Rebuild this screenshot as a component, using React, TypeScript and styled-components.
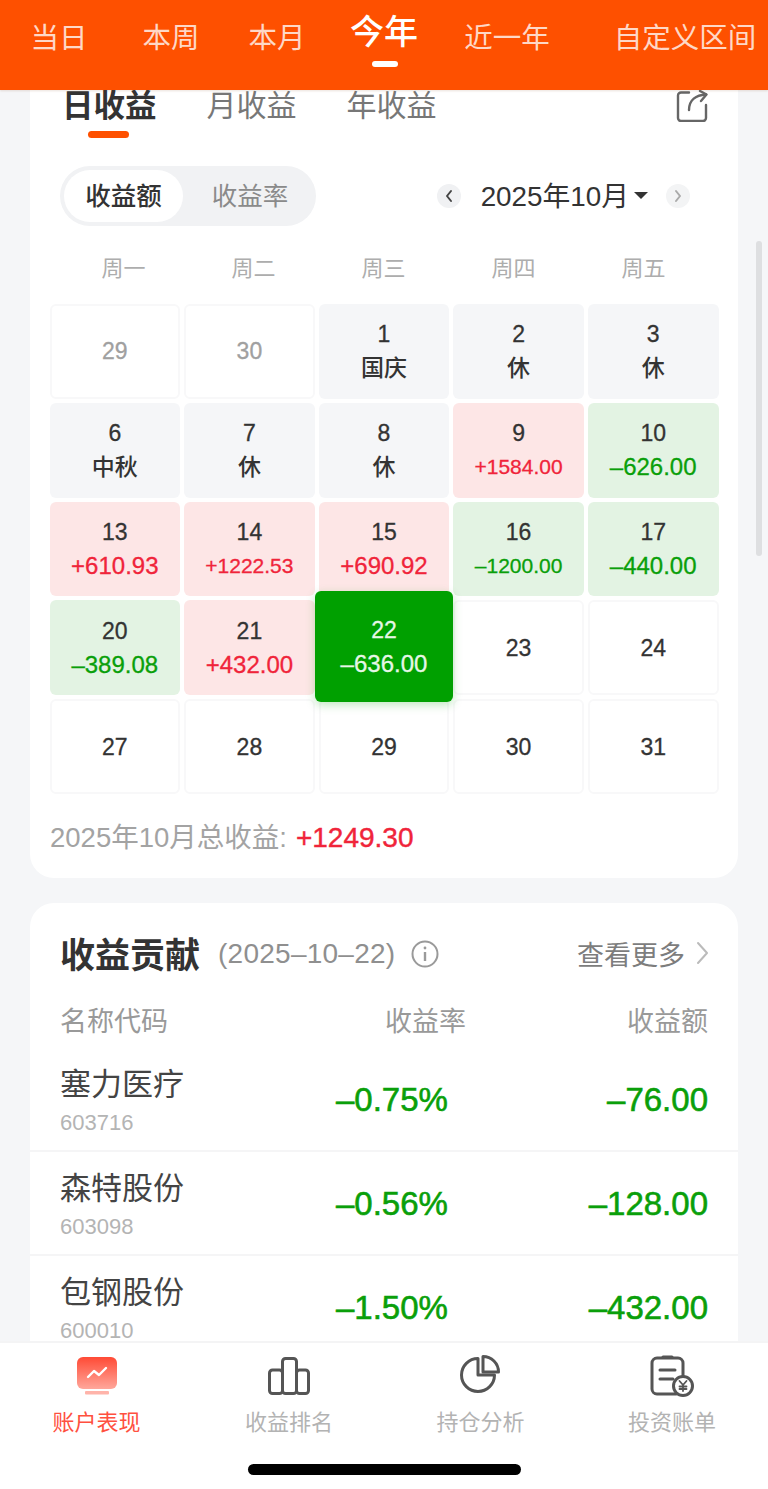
import styled, { createGlobalStyle } from 'styled-components';

const GlobalStyle = createGlobalStyle`
  html, body {
    margin: 0;
    padding: 0;
    background: #f5f6f8;
  }
  * {
    box-sizing: border-box;
  }
`;

const Page = styled.div`
  position: relative;
  width: 768px;
  height: 1489px;
  display: flex;
  flex-direction: column;
  overflow: hidden;
  background: #f5f6f8;
  font-family: "Liberation Sans", "Noto Sans CJK SC", sans-serif;
  color: #333;
`;

const RangeBar = styled.div`
  flex: none;
  height: 90px;
  display: flex;
  background: #fe5000;
  box-shadow: 0 1px 2px rgba(120, 60, 20, 0.15);
  z-index: 2;
`;

const RangeItem = styled.div<{ $w: number; $pad?: number; $active?: boolean }>`
  position: relative;
  flex: none;
  width: ${(p) => p.$w}px;
  padding-left: ${(p) => p.$pad || 0}px;
  padding-top: ${(p) => (p.$active ? 12 : 18)}px;
  text-align: center;
  white-space: nowrap;
  color: ${(p) => (p.$active ? '#fff' : 'rgba(255,255,255,0.78)')};
  font-size: ${(p) => (p.$active ? 34 : 28.5)}px;
  font-weight: ${(p) => (p.$active ? 500 : 400)};
  line-height: 40px;
`;

const RangeMark = styled.span`
  position: absolute;
  left: 42px;
  top: 61px;
  width: 26px;
  height: 6px;
  border-radius: 3px;
  background: #fff;
`;

const Scroll = styled.div`
  flex: 1;
  min-height: 0;
  padding: 0 30px;
`;

const ScrollThumb = styled.div`
  position: absolute;
  left: 756px;
  top: 241px;
  width: 6px;
  height: 315px;
  border-radius: 3px;
  background: #dedfe1;
`;

const Card = styled.section`
  background: #fff;
`;

const CalendarCard = styled(Card)`
  height: 788px;
  padding: 0 19.5px;
  border-radius: 0 0 24px 24px;
`;

const TabRow = styled.div`
  height: 48px;
  padding: 0 10.5px 0 12.5px;
  display: flex;
  gap: 50px;
`;

const Tab = styled.div<{ $active?: boolean }>`
  position: relative;
  font-size: ${(p) => (p.$active ? 31.5 : 30)}px;
  font-weight: ${(p) => (p.$active ? 700 : 400)};
  color: ${(p) => (p.$active ? '#333' : '#777')};
  line-height: 32px;
`;

const TabMark = styled.span`
  position: absolute;
  left: 26px;
  top: 41px;
  width: 41px;
  height: 7px;
  border-radius: 4px;
  background: #fe5000;
`;

const ShareButton = styled.div`
  margin-left: auto;
  width: 32px;
  height: 32px;
  color: #666;
`;

const FilterRow = styled.div`
  margin-top: 28px;
  padding: 0 10.5px;
  display: flex;
  align-items: center;
  justify-content: space-between;
`;

const Toggle = styled.div`
  width: 256px;
  height: 60px;
  padding: 4px;
  display: flex;
  align-items: center;
  border-radius: 30px;
  background: #f1f2f4;
`;

const ToggleItem = styled.div<{ $active?: boolean }>`
  height: 52px;
  width: ${(p) => (p.$active ? 119 : 129)}px;
  padding-left: ${(p) => (p.$active ? 0 : 5)}px;
  border-radius: 26px;
  background: ${(p) => (p.$active ? '#fff' : 'transparent')};
  color: ${(p) => (p.$active ? '#333' : '#8a8a8a')};
  font-size: 25.5px;
  font-weight: ${(p) => (p.$active ? 500 : 400)};
  line-height: 52px;
  text-align: center;
  white-space: nowrap;
`;

const MonthPicker = styled.div`
  display: flex;
  align-items: center;
  margin-right: 18px;
`;

const RoundArrow = styled.div<{ $dim?: boolean }>`
  width: 24px;
  height: 24px;
  border-radius: 50%;
  background: ${(p) => (p.$dim ? '#f3f4f5' : '#f0f1f3')};
  color: ${(p) => (p.$dim ? '#aaa' : '#444')};
  display: flex;
  align-items: center;
  justify-content: center;
`;

const MonthText = styled.div`
  margin: 0 18px 0 20px;
  padding-bottom: 5px;
  display: flex;
  align-items: center;
  gap: 5px;
  font-size: 27.8px;
  color: #333;
  white-space: nowrap;
`;

const Caret = styled.span`
  margin-top: 3px;
  width: 0;
  height: 0;
  border-left: 7px solid transparent;
  border-right: 7px solid transparent;
  border-top: 7px solid #333;
`;

const WeekRow = styled.div`
  margin-top: 27px;
  padding: 0 10px 0 9px;
  display: grid;
  grid-template-columns: repeat(5, 1fr);
  font-size: 22px;
  line-height: 32px;
  color: #adadad;
  text-align: center;
`;

const DayGrid = styled.div`
  margin-top: 19px;
  display: grid;
  grid-template-columns: repeat(5, 1fr);
  grid-auto-rows: 94.8px;
  gap: 4px;
`;

type DayKind = 'muted' | 'off' | 'up' | 'down' | 'selected' | 'plain';

const cellBg: Record<DayKind, string> = {
  muted: '#fff',
  plain: '#fff',
  off: '#f5f6f8',
  up: '#fde6e6',
  down: '#e3f3e3',
  selected: '#00a000',
};

const DayCell = styled.div<{ $kind: DayKind }>`
  position: relative;
  display: flex;
  flex-direction: column;
  align-items: center;
  justify-content: center;
  gap: 4px;
  border-radius: 6px;
  background: ${(p) => cellBg[p.$kind]};
  border: ${(p) => (p.$kind === 'muted' || p.$kind === 'plain' ? '2px solid #f8f8f9' : 'none')};
  color: ${(p) => (p.$kind === 'muted' ? '#a0a0a0' : p.$kind === 'selected' ? '#e6f7e6' : '#333')};
  ${(p) =>
    p.$kind === 'selected' &&
    `margin: -9px -4px -7px;
     z-index: 1;
     box-shadow: 0 3px 10px rgba(0, 160, 0, 0.25);`}
`;

const DayNum = styled.div`
  font-size: 23px;
  line-height: 30px;
  -webkit-text-stroke: 0.3px currentColor;
`;

const DayNote = styled.div`
  font-size: 23px;
  font-weight: 500;
  line-height: 30px;
`;

const DayValue = styled.div<{ $kind: DayKind; $long?: boolean }>`
  font-size: ${(p) => (p.$long ? 21 : 24)}px;
  line-height: 30px;
  white-space: nowrap;
  color: ${(p) => (p.$kind === 'up' ? '#f0243a' : p.$kind === 'down' ? '#0a9f0a' : '#e6f7e6')};
  -webkit-text-stroke: 0.3px currentColor;
`;

const MonthTotal = styled.div`
  margin-top: 26px;
  padding-left: 0.5px;
  display: flex;
  align-items: baseline;
  gap: 9px;
  font-size: 27.5px;
  line-height: 36px;
  color: #a3a3a3;
`;

const TotalValue = styled.span`
  font-size: 28px;
  color: #f0243a;
  -webkit-text-stroke: 0.4px currentColor;
`;

const ContributionCard = styled(Card)`
  height: 600px;
  margin-top: 25px;
  border-radius: 24px 24px 0 0;
`;

const ContributionHead = styled.div`
  height: 102px;
  padding: 0 29px 0 30px;
  display: flex;
  align-items: center;
`;

const ContributionTitle = styled.h2`
  margin: 0;
  padding-bottom: 4px;
  font-size: 35px;
  font-weight: 700;
  color: #333;
`;

const ContributionDate = styled.span`
  margin-left: 18px;
  font-size: 28px;
  letter-spacing: 0.25px;
  color: #8f8f8f;
`;

const InfoIcon = styled.span`
  margin-left: 16px;
  display: flex;
  color: #9a9a9a;
`;

const MoreLink = styled.div`
  margin-left: auto;
  padding-bottom: 2px;
  display: flex;
  align-items: center;
  gap: 11px;
  font-size: 27px;
  color: #7d7d7d;
`;

const TableRow = styled.div<{ $head?: boolean }>`
  height: ${(p) => (p.$head ? 32 : 104)}px;
  padding: 0 30px;
  display: grid;
  grid-template-columns: 1fr 130px 242px;
  align-items: center;
  ${(p) => (p.$head ? 'margin: 1px 0 10px;' : 'border-bottom: 2px solid #f5f5f6;')}
  ${(p) => (p.$head ? 'font-size: 27px; color: #999;' : '')}
`;

const HeadCell = styled.div<{ $right?: boolean }>`
  text-align: ${(p) => (p.$right ? 'right' : 'left')};
  line-height: 32px;
`;

const StockInfo = styled.div`
  padding-top: 2px;
`;

const StockName = styled.div`
  font-size: 31px;
  line-height: 40px;
  color: #444;
`;

const StockCode = styled.div`
  margin-top: 5px;
  font-size: 22px;
  line-height: 26px;
  color: #b4b4b4;
`;

const StockValue = styled.div<{ $inset?: number }>`
  padding-top: 2px;
  padding-right: ${(p) => p.$inset || 0}px;
  font-size: 33px;
  line-height: 40px;
  text-align: right;
  white-space: nowrap;
  color: #0a9f0a;
  -webkit-text-stroke: 0.6px currentColor;
`;

const TabBar = styled.nav`
  flex: none;
  position: relative;
  height: 148px;
  padding-top: 11px;
  display: grid;
  grid-template-columns: 193px 192px 191px 192px;
  background: #fff;
  border-top: 2px solid #f4f4f5;
  z-index: 2;
`;

const TabBarItem = styled.div<{ $active?: boolean }>`
  display: flex;
  flex-direction: column;
  align-items: center;
  font-size: 22px;
  line-height: 28px;
  color: ${(p) => (p.$active ? '#ff5040' : '#b3b3b3')};
`;

const TabBarIcon = styled.div`
  height: 44px;
  margin-bottom: 11px;
  display: flex;
  align-items: center;
  justify-content: center;
`;

const PieWrap = styled.div`
  margin: -4px 0 0 -2px;
  display: flex;
`;

const HomeBar = styled.div`
  position: absolute;
  left: 248px;
  top: 121px;
  width: 273px;
  height: 11px;
  border-radius: 6px;
  background: #000;
`;

const ShareIcon = () => (
  <svg width="32" height="32" viewBox="0 0 32 32" fill="none" stroke="currentColor" strokeWidth="2.4" strokeLinecap="round" strokeLinejoin="round">
    <path d="M13 2.5H5a3 3 0 0 0-3 3V28a3 3 0 0 0 3 3h22a3 3 0 0 0 3-3V15" />
    <path d="M13 20C13 10 20 5 30 4.5" />
    <path d="M24 1l6.5 3.5L25 11" />
  </svg>
);

const ChevronIcon = ({ left }: { left?: boolean }) => (
  <svg width="10" height="14" viewBox="0 0 10 14" fill="none" stroke="currentColor" strokeWidth="2" strokeLinecap="round" strokeLinejoin="round">
    <path d={left ? 'M7 2 3 7l4 5' : 'M3 2l4 5-4 5'} />
  </svg>
);

const Info = () => (
  <svg width="28" height="28" viewBox="0 0 28 28" fill="none" stroke="currentColor" strokeWidth="2">
    <circle cx="14" cy="14" r="12.5" />
    <path d="M14 12v9" strokeWidth="2.4" />
    <circle cx="14" cy="8" r="1.4" fill="currentColor" stroke="none" />
  </svg>
);

const MoreChevron = () => (
  <svg width="13" height="24" viewBox="0 0 13 24" fill="none" stroke="#bbb" strokeWidth="2" strokeLinecap="round" strokeLinejoin="round">
    <path d="M2 2l9 10-9 10" />
  </svg>
);

const PerformanceIcon = () => (
  <svg width="40" height="38" viewBox="0 0 40 38" fill="none">
    <defs>
      <linearGradient id="perf" x1="0" y1="0" x2="0" y2="1">
        <stop offset="0" stopColor="#ff4a35" />
        <stop offset="1" stopColor="#ffa79b" />
      </linearGradient>
    </defs>
    <rect width="40" height="32" rx="6" fill="url(#perf)" />
    <rect x="8" y="34" width="24" height="3.5" rx="1" fill="#ffb4aa" />
    <path d="M11 20l6-6 5 4 7-7" stroke="#fff" strokeWidth="2.4" strokeLinecap="round" strokeLinejoin="round" />
  </svg>
);

const BarsIcon = () => (
  <svg width="42" height="38" viewBox="0 0 42 38" fill="none" stroke="#555" strokeWidth="3" strokeLinejoin="round">
    <rect x="1.5" y="13" width="13" height="23.5" rx="3" />
    <rect x="14.5" y="1.5" width="14" height="35" rx="3" />
    <rect x="28.5" y="13" width="12" height="23.5" rx="3" />
  </svg>
);

const PieIcon = () => (
  <PieWrap>
    <svg width="40" height="38" viewBox="0 0 40 38" fill="none" stroke="#555" strokeWidth="3" strokeLinejoin="round">
      <path d="M18 3.5A16.5 16.5 0 1 0 34.5 20H18z" />
      <path d="M23 1.5A15.5 15.5 0 0 1 38.5 17H23z" />
    </svg>
  </PieWrap>
);

const BillIcon = () => (
  <svg width="44" height="42" viewBox="0 0 44 42" fill="none" stroke="#555" strokeWidth="3" strokeLinecap="round">
    <path d="M26 39H7a5 5 0 0 1-5-5V8a5 5 0 0 1 5-5h21a5 5 0 0 1 5 5v14" />
    <path d="M13 2h9" />
    <path d="M10 15h15M10 24h13" />
    <circle cx="33" cy="31" r="9.5" fill="#fff" />
    <path d="M29.5 26l3.5 4 3.5-4M33 30v6M29.5 31.5h7M29.5 34h7" strokeWidth="1.8" />
  </svg>
);

const ranges = [
  { label: '当日', w: 118 },
  { label: '本周', w: 106 },
  { label: '本月', w: 106 },
  { label: '今年', w: 108, active: true },
  { label: '近一年', w: 138 },
  { label: '自定义区间', w: 192, pad: 26 },
];

const days: { n: number; kind: DayKind; note?: string; value?: string; long?: boolean }[] = [
  { n: 29, kind: 'muted' },
  { n: 30, kind: 'muted' },
  { n: 1, kind: 'off', note: '国庆' },
  { n: 2, kind: 'off', note: '休' },
  { n: 3, kind: 'off', note: '休' },
  { n: 6, kind: 'off', note: '中秋' },
  { n: 7, kind: 'off', note: '休' },
  { n: 8, kind: 'off', note: '休' },
  { n: 9, kind: 'up', value: '+1584.00', long: true },
  { n: 10, kind: 'down', value: '–626.00' },
  { n: 13, kind: 'up', value: '+610.93' },
  { n: 14, kind: 'up', value: '+1222.53', long: true },
  { n: 15, kind: 'up', value: '+690.92' },
  { n: 16, kind: 'down', value: '–1200.00', long: true },
  { n: 17, kind: 'down', value: '–440.00' },
  { n: 20, kind: 'down', value: '–389.08' },
  { n: 21, kind: 'up', value: '+432.00' },
  { n: 22, kind: 'selected', value: '–636.00' },
  { n: 23, kind: 'plain' },
  { n: 24, kind: 'plain' },
  { n: 27, kind: 'plain' },
  { n: 28, kind: 'plain' },
  { n: 29, kind: 'plain' },
  { n: 30, kind: 'plain' },
  { n: 31, kind: 'plain' },
];

const stocks = [
  { name: '塞力医疗', code: '603716', rate: '–0.75%', amount: '–76.00' },
  { name: '森特股份', code: '603098', rate: '–0.56%', amount: '–128.00' },
  { name: '包钢股份', code: '600010', rate: '–1.50%', amount: '–432.00' },
];

export default function App() {
  return (
    <Page>
      <GlobalStyle />
      <RangeBar>
        {ranges.map((r) => (
          <RangeItem key={r.label} $w={r.w} $pad={r.pad} $active={r.active}>
            {r.label}
            {r.active && <RangeMark />}
          </RangeItem>
        ))}
      </RangeBar>

      <Scroll>
        <CalendarCard>
          <TabRow>
            <Tab $active>
              日收益
              <TabMark />
            </Tab>
            <Tab>月收益</Tab>
            <Tab>年收益</Tab>
            <ShareButton>
              <ShareIcon />
            </ShareButton>
          </TabRow>

          <FilterRow>
            <Toggle>
              <ToggleItem $active>收益额</ToggleItem>
              <ToggleItem>收益率</ToggleItem>
            </Toggle>
            <MonthPicker>
              <RoundArrow>
                <ChevronIcon left />
              </RoundArrow>
              <MonthText>
                2025年10月
                <Caret />
              </MonthText>
              <RoundArrow $dim>
                <ChevronIcon />
              </RoundArrow>
            </MonthPicker>
          </FilterRow>

          <WeekRow>
            <div>周一</div>
            <div>周二</div>
            <div>周三</div>
            <div>周四</div>
            <div>周五</div>
          </WeekRow>

          <DayGrid>
            {days.map((d, i) => (
              <DayCell key={i} $kind={d.kind}>
                <DayNum>{d.n}</DayNum>
                {d.note && <DayNote>{d.note}</DayNote>}
                {d.value && (
                  <DayValue $kind={d.kind} $long={d.long}>
                    {d.value}
                  </DayValue>
                )}
              </DayCell>
            ))}
          </DayGrid>

          <MonthTotal>
            2025年10月总收益:
            <TotalValue>+1249.30</TotalValue>
          </MonthTotal>
        </CalendarCard>

        <ContributionCard>
          <ContributionHead>
            <ContributionTitle>收益贡献</ContributionTitle>
            <ContributionDate>(2025–10–22)</ContributionDate>
            <InfoIcon>
              <Info />
            </InfoIcon>
            <MoreLink>
              查看更多
              <MoreChevron />
            </MoreLink>
          </ContributionHead>

          <TableRow $head>
            <HeadCell>名称代码</HeadCell>
            <HeadCell $right>收益率</HeadCell>
            <HeadCell $right>收益额</HeadCell>
          </TableRow>

          {stocks.map((s) => (
            <TableRow key={s.code}>
              <StockInfo>
                <StockName>{s.name}</StockName>
                <StockCode>{s.code}</StockCode>
              </StockInfo>
              <StockValue $inset={20}>{s.rate}</StockValue>
              <StockValue>{s.amount}</StockValue>
            </TableRow>
          ))}
        </ContributionCard>
      </Scroll>

      <ScrollThumb />

      <TabBar>
        <TabBarItem $active>
          <TabBarIcon>
            <PerformanceIcon />
          </TabBarIcon>
          账户表现
        </TabBarItem>
        <TabBarItem>
          <TabBarIcon>
            <BarsIcon />
          </TabBarIcon>
          收益排名
        </TabBarItem>
        <TabBarItem>
          <TabBarIcon>
            <PieIcon />
          </TabBarIcon>
          持仓分析
        </TabBarItem>
        <TabBarItem>
          <TabBarIcon>
            <BillIcon />
          </TabBarIcon>
          投资账单
        </TabBarItem>
        <HomeBar />
      </TabBar>
    </Page>
  );
}
